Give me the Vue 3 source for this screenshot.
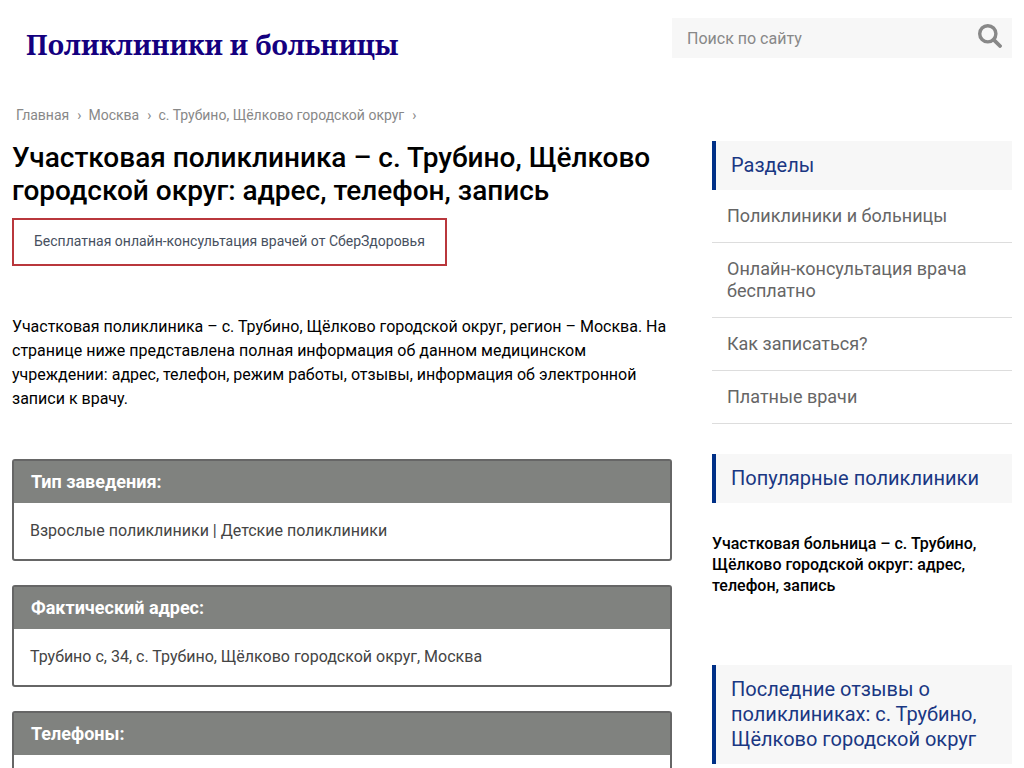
<script setup>
const crumbs = ['Главная', 'Москва', 'с. Трубино, Щёлково городской округ']

const cards = [
  { title: 'Тип заведения:', text: 'Взрослые поликлиники | Детские поликлиники' },
  { title: 'Фактический адрес:', text: 'Трубино с, 34, с. Трубино, Щёлково городской округ, Москва' },
  { title: 'Телефоны:', text: '' },
]

const sections = [
  'Поликлиники и больницы',
  'Онлайн-консультация врача бесплатно',
  'Как записаться?',
  'Платные врачи',
]
</script>

<template>
  <div class="page">
    <header class="header">
      <a class="logo" href="#">Поликлиники и больницы</a>
      <form class="search" role="search" @submit.prevent>
        <input class="search-input" type="text" placeholder="Поиск по сайту" aria-label="Поиск по сайту" />
        <button class="search-button" type="submit" aria-label="Найти">
          <svg width="24" height="24" viewBox="0 0 24 24" fill="none" stroke="#888">
            <circle cx="9.8" cy="9.8" r="8.1" stroke-width="3.4" />
            <path d="M15.8 15.8L22 22" stroke-width="3.8" stroke-linecap="round" />
          </svg>
        </button>
      </form>
    </header>

    <nav class="crumbs">
      <span v-for="crumb in crumbs" :key="crumb" class="crumb">
        <a href="#">{{ crumb }}</a>
        <span class="arrow">›</span>
      </span>
    </nav>

    <div class="columns">
      <main class="main">
        <h1 class="title">Участковая поликлиника – с. Трубино, Щёлково городской округ: адрес, телефон, запись</h1>
        <a class="consult" href="#">Бесплатная онлайн-консультация врачей от СберЗдоровья</a>
        <p class="intro">
          Участковая поликлиника – с. Трубино, Щёлково городской округ, регион – Москва. На странице ниже
          представлена полная информация об данном медицинском учреждении: адрес, телефон, режим работы,
          отзывы, информация об электронной записи к врачу.
        </p>
        <section v-for="card in cards" :key="card.title" class="card">
          <h2 class="card-title">{{ card.title }}</h2>
          <p class="card-text">{{ card.text }}</p>
        </section>
      </main>

      <aside class="side">
        <h2 class="side-title">Разделы</h2>
        <ul class="menu">
          <li v-for="item in sections" :key="item"><a href="#">{{ item }}</a></li>
        </ul>
        <h2 class="side-title">Популярные поликлиники</h2>
        <a class="popular" href="#">Участковая больница – с. Трубино, Щёлково городской округ: адрес, телефон, запись</a>
        <h2 class="side-title">Последние отзывы о поликлиниках: с. Трубино, Щёлково городской округ</h2>
      </aside>
    </div>
  </div>
</template>

<style>
html,
body {
  height: 100%;
  overflow: hidden;
}
#app {
  height: 100%;
  overflow: hidden;
}
</style>

<style scoped>
.page {
  padding: 18px 12px 0;
  background: #fff;
  color: #000;
  font-family: Roboto, "Liberation Sans", sans-serif;
  font-size: 16px;
}
.page * {
  box-sizing: border-box;
}
a {
  color: inherit;
  text-decoration: none;
}
.header {
  display: flex;
  align-items: flex-start;
  justify-content: space-between;
}
.logo {
  margin: 7px 0 0 14px;
  color: #14007f;
  font: bold 27px/40px "Noto Serif", "DejaVu Serif Condensed", "DejaVu Serif", serif;
}
.search {
  display: flex;
  width: 340px;
  height: 40px;
  background: #f7f7f7;
}
.search-input {
  flex: 1;
  min-width: 0;
  padding: 0 15px;
  border: 0;
  outline: 0;
  background: none;
  color: #888;
  font: inherit;
}
.search-input::placeholder {
  color: #888;
  opacity: 1;
}
.search-button {
  display: flex;
  padding: 6px 10px 0 0;
  border: 0;
  background: none;
}
.crumbs {
  display: flex;
  margin: 40px 0 0 4px;
  color: #888;
  font-size: 14px;
  line-height: 20px;
}
.arrow {
  margin: 0 7px 0 8px;
}
.columns {
  display: grid;
  grid-template-columns: minmax(0, 1fr) 300px;
  gap: 40px;
  margin-top: 16px;
}
.title {
  margin: 0;
  font-size: 28px;
  font-weight: 500;
  line-height: 33px;
}
.consult {
  display: table;
  margin-top: 11px;
  padding: 11px 20px 13px;
  border: 2px solid #b9373c;
  color: #475060;
  font-size: 14px;
  line-height: 20px;
}
.intro {
  margin: 49px 0 48px;
  line-height: 24px;
}
.card {
  margin-bottom: 24px;
  border: 2px solid #666;
  border-radius: 3px;
}
.card-title {
  margin: 0;
  padding: 9px 17px;
  background: #80827f;
  color: #fff;
  font-size: 18px;
  font-weight: 700;
  line-height: 24px;
}
.card-text {
  min-height: 56px;
  margin: 0;
  padding: 16px;
  color: #444;
  line-height: 24px;
}
.side-title {
  margin: 0;
  padding: 12px 15px;
  border-left: 4px solid #003087;
  background: #f7f7f7;
  color: #1a3783;
  font-size: 20px;
  font-weight: 400;
  line-height: 25px;
}
.menu {
  margin: 0 0 30px;
  padding: 0;
  list-style: none;
}
.menu li {
  padding: 15px;
  border-bottom: 1px solid #ddd;
  color: #666;
  font-size: 18px;
  line-height: 22px;
}
.popular {
  display: block;
  margin: 30px 0 69px;
  font-weight: 500;
  line-height: 21px;
}
</style>
